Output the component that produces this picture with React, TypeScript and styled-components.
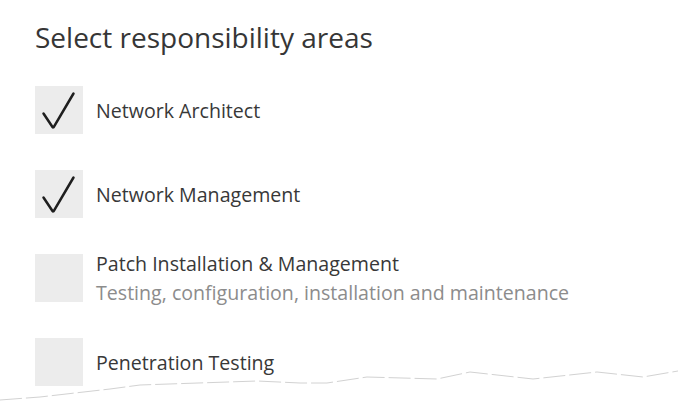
import { useState } from 'react';
import styled, { createGlobalStyle } from 'styled-components';

const GlobalStyle = createGlobalStyle`
  html, body {
    margin: 0;
    padding: 0;
    background: #fff;
  }
  body {
    font-family: 'Open Sans', 'Liberation Sans', sans-serif;
    color: #333;
  }
`;

const Page = styled.div`
  position: relative;
  width: 678px;
  height: 402px;
  overflow: hidden;
  padding: 17px 35px 0;
  box-sizing: border-box;
`;

const Title = styled.h1`
  margin: 0 0 29px;
  font-size: 28px;
  font-weight: 400;
  line-height: 40px;
  color: #363636;
`;

const List = styled.ul`
  list-style: none;
  margin: 0;
  padding: 0;
  display: flex;
  flex-direction: column;
  gap: 36px;
`;

const Row = styled.li`
  display: flex;
  align-items: center;
  gap: 13px;
  height: 48px;
  cursor: pointer;
`;

const Box = styled.span`
  flex: none;
  width: 48px;
  height: 48px;
  background: #ececec;
  display: flex;
  align-items: center;
  justify-content: center;
`;

const Texts = styled.div`
  display: flex;
  flex-direction: column;
`;

const Label = styled.span`
  font-size: 19.6px;
  line-height: 29px;
  color: #383838;
`;

const Hint = styled.span`
  font-size: 19.6px;
  line-height: 29px;
  color: #8c8c8c;
`;

const TornEdge = styled.svg`
  position: absolute;
  left: 0;
  bottom: 0;
  width: 678px;
  height: 40px;
`;

const Check = () => (
  <svg width="48" height="48" viewBox="0 0 48 48">
    <path
      d="M8.5 27.5 L17.5 41 Q18.2 42 19 40.6 L38.5 7.5"
      fill="none"
      stroke="#1e1e1e"
      strokeWidth="2.5"
      strokeLinecap="round"
      strokeLinejoin="round"
    />
  </svg>
);

const areas = [
  { label: 'Network Architect', hint: '', checked: true },
  { label: 'Network Management', hint: '', checked: true },
  {
    label: 'Patch Installation & Management',
    hint: 'Testing, configuration, installation and maintenance',
    checked: false,
  },
  { label: 'Penetration Testing', hint: '', checked: false },
];

const edge =
  '0,400 40,397 110,389 140,385 257,381 300,383 327,383 367,377 437,379 470,372 533,379 597,372 643,377 678,371';

export default function App() {
  const [checked, setChecked] = useState(areas.map((a) => a.checked));

  const toggle = (i: number) => {
    setChecked((prev) => prev.map((c, j) => (j === i ? !c : c)));
  };

  return (
    <>
      <GlobalStyle />
      <Page>
        <Title>Select responsibility areas</Title>
        <List>
          {areas.map((a, i) => (
            <Row key={a.label} onClick={() => toggle(i)}>
              <Box>{checked[i] && <Check />}</Box>
              <Texts>
                <Label>{a.label}</Label>
                {a.hint && <Hint>{a.hint}</Hint>}
              </Texts>
            </Row>
          ))}
        </List>
        <TornEdge viewBox="0 362 678 40">
          <polygon points={`${edge} 678,402 0,402`} fill="#fff" />
          <polyline
            points={edge}
            fill="none"
            stroke="#d2d2d2"
            strokeWidth="1"
            strokeDasharray="22 4"
          />
        </TornEdge>
      </Page>
    </>
  );
}
